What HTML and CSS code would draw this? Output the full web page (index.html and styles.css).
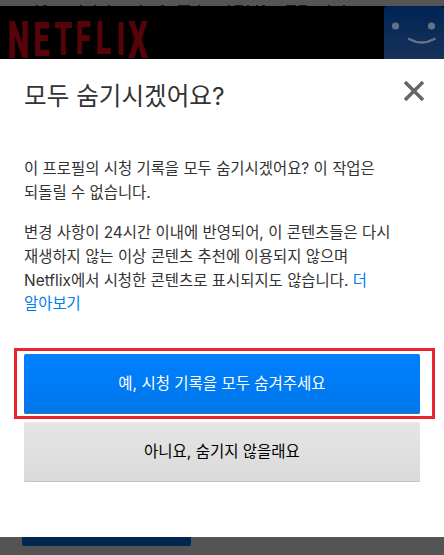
FILE: index.html
```html
<!DOCTYPE html>
<html lang="ko">
<head>
  <meta charset="UTF-8">
  <meta name="viewport" content="width=device-width, initial-scale=1.0">
  <title>Netflix</title>
  <link rel="stylesheet" href="styles.css">
</head>
<body>
  <div class="topbar">
    <svg width="444" height="6" viewBox="0 0 444 6">
      <path d="M36 5.5h2M43 5.5h4M80 5.5h2M94 5.5h2M108 5.5h2M140 5.5h2M161 5.5h3M178 5.5h12M198 5.5h2M228 5.5h2M235 5.5h8M247 5.5h2M256 5.5h2M262 5.5h3M286 5.5h10M299 5.5h8M328 5.5h2M343 5.5h2" stroke="#151515"/>
    </svg>
  </div>
  <header class="header">
    <svg class="logo" width="160" height="53" viewBox="0 0 160 53">
      <text class="logo-text" transform="scale(.6 1)"><tspan x="12.5" y="52" font-size="51.3">N</tspan><tspan x="55.5" y="50" font-size="48.5">E</tspan><tspan x="90.500" y="49" font-size="47">T</tspan><tspan x="126" y="48" font-size="46">F</tspan><tspan x="159.5" y="48.500" font-size="46.5">L</tspan><tspan x="194" y="49" font-size="47">I</tspan><tspan x="213.500" y="52" font-size="51.3">X</tspan></text>
    </svg>
    <svg class="avatar" width="60" height="53" viewBox="0 0 60 53">
      <circle cx="11.5" cy="20" r="3.6"/>
      <circle cx="47.5" cy="20" r="3.6"/>
      <path d="M25 33Q37.500 40 50.500 33" fill="none" stroke="#647286" stroke-width="2.400" stroke-linecap="round"/>
    </svg>
  </header>
  <main class="modal">
    <div class="modal-header">
      <h1>모두 숨기시겠어요?</h1>
      <button class="close" aria-label="닫기">
        <svg width="20" height="20" viewBox="0 0 20 20">
          <path d="M1 1L19 19M19 1L1 19" stroke="#666" stroke-width="3.500"/>
        </svg>
      </button>
    </div>
    <p>이 프로필의 시청 기록을 모두 숨기시겠어요? 이 작업은<br>되돌릴 수 없습니다.</p>
    <p>변경 사항이 24시간 이내에 반영되어, 이 콘텐츠들은 다시<br>재생하지 않는 이상 콘텐츠 추천에 이용되지 않으며<br>Netflix에서 시청한 콘텐츠로 표시되지도 않습니다. <a href="#">더<br>알아보기</a></p>
    <div class="highlight">
      <button class="btn btn-blue">예, 시청 기록을 모두 숨겨주세요</button>
    </div>
    <button class="btn btn-gray">아니요, 숨기지 않을래요</button>
  </main>
  <footer class="footer">
    <div class="footer-btn"></div>
  </footer>
</body>
</html>
```
FILE: styles.css
```css
* {
  box-sizing: border-box;
}
body {
  margin: 0;
  width: 444px;
  height: 555px;
  overflow: hidden;
  background: #545454;
  color: #333;
  font-family: Inter, "Noto Sans CJK KR", sans-serif;
  font-size: 15.45px;
}
svg {
  display: block;
}
.topbar {
  height: 6px;
  background: #555;
}
.header {
  display: flex;
  justify-content: space-between;
  height: 53px;
  background: #000;
}
.logo {
  overflow: visible;
}
.logo-text {
  font-family: Roboto, sans-serif;
  font-weight: 900;
  fill: #56040a;
}
.avatar {
  background: linear-gradient(#002454, #17325a);
  border-radius: 3px 3px 0 0;
  fill: #647286;
}
.modal {
  height: 478px;
  padding: 18px 24px 0;
  background: #fff;
}
.modal-header {
  display: flex;
  justify-content: space-between;
  height: 80px;
}
h1 {
  margin: 0;
  font-size: 24.6px;
  font-weight: 400;
  line-height: 38px;
}
.close {
  width: 20px;
  height: 20px;
  margin: 4px -4px 0 0;
  padding: 0;
  border: none;
  background: none;
}
p {
  margin: 0 0 16.5px;
  line-height: 23.8px;
  white-space: nowrap;
}
a {
  color: #0080e8;
  text-decoration: none;
}
.highlight {
  height: 71px;
  margin: 31.5px -15px 3px -10px;
  padding: 3px 12px 0 7px;
  border: 3px solid #e52530;
}
.btn {
  display: block;
  width: 396px;
  height: 60px;
  padding: 0 0 3px;
  border: none;
  border-radius: 2px;
  font-family: inherit;
  font-size: 15.5px;
}
.btn-blue {
  background: linear-gradient(#0080ff, #0077ea);
  box-shadow: inset 0 -1px #4d6b96;
  color: #fff;
}
.btn-gray {
  background: linear-gradient(#e5e5e5, #dadada);
  box-shadow: inset 0 -1px #c4c4c4;
  color: #000;
}
.footer {
  height: 18px;
  padding-left: 22px;
}
.footer-btn {
  width: 169px;
  height: 9px;
  border-radius: 0 0 2px 2px;
  background: #002750;
}
```
